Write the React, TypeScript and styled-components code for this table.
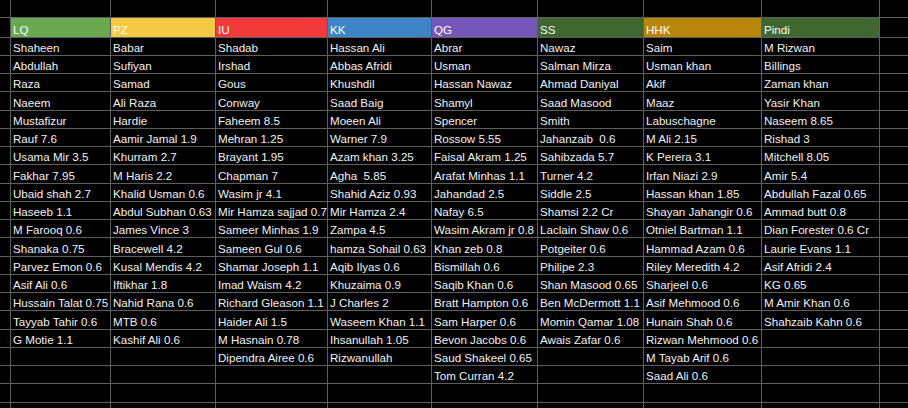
import React from "react";
import styled, { createGlobalStyle } from "styled-components";

const Global = createGlobalStyle`
  html, body {
    margin: 0;
    padding: 0;
    background: #000;
    overflow: hidden;
  }
`;

type Team = { name: string; color: string; players: string[] };

const teams: Team[] = [
  {
    name: "LQ",
    color: "#6aa84f",
    players: [
      "Shaheen", "Abdullah", "Raza", "Naeem", "Mustafizur", "Rauf 7.6", "Usama Mir 3.5",
      "Fakhar 7.95", "Ubaid shah 2.7", "Haseeb 1.1", "M Farooq 0.6", "Shanaka 0.75",
      "Parvez Emon 0.6", "Asif Ali 0.6", "Hussain Talat 0.75", "Tayyab Tahir 0.6", "G Motie 1.1",
    ],
  },
  {
    name: "PZ",
    color: "#f6c945",
    players: [
      "Babar", "Sufiyan", "Samad", "Ali Raza", "Hardie", "Aamir Jamal 1.9", "Khurram 2.7",
      "M Haris 2.2", "Khalid Usman 0.6", "Abdul Subhan 0.63", "James Vince 3", "Bracewell 4.2",
      "Kusal Mendis 4.2", "Iftikhar 1.8", "Nahid Rana 0.6", "MTB 0.6", "Kashif Ali 0.6",
    ],
  },
  {
    name: "IU",
    color: "#f33a3a",
    players: [
      "Shadab", "Irshad", "Gous", "Conway", "Faheem 8.5", "Mehran 1.25", "Brayant 1.95",
      "Chapman 7", "Wasim jr 4.1", "Mir Hamza sajjad 0.7", "Sameer Minhas 1.9", "Sameen Gul 0.6",
      "Shamar Joseph 1.1", "Imad Waism 4.2", "Richard Gleason 1.1", "Haider Ali 1.5",
      "M Hasnain 0.78", "Dipendra Airee 0.6",
    ],
  },
  {
    name: "KK",
    color: "#3d85c6",
    players: [
      "Hassan Ali", "Abbas Afridi", "Khushdil", "Saad Baig", "Moeen Ali", "Warner 7.9",
      "Azam khan 3.25", "Agha  5.85", "Shahid Aziz 0.93", "Mir Hamza 2.4", "Zampa 4.5",
      "hamza Sohail 0.63", "Aqib Ilyas 0.6", "Khuzaima 0.9", "J Charles 2", "Waseem Khan 1.1",
      "Ihsanullah 1.05", "Rizwanullah",
    ],
  },
  {
    name: "QG",
    color: "#7556b9",
    players: [
      "Abrar", "Usman", "Hassan Nawaz", "Shamyl", "Spencer", "Rossow 5.55", "Faisal Akram 1.25",
      "Arafat Minhas 1.1", "Jahandad 2.5", "Nafay 6.5", "Wasim Akram jr 0.8", "Khan zeb 0.8",
      "Bismillah 0.6", "Saqib Khan 0.6", "Bratt Hampton 0.6", "Sam Harper 0.6", "Bevon Jacobs 0.6",
      "Saud Shakeel 0.65", "Tom Curran 4.2",
    ],
  },
  {
    name: "SS",
    color: "#3e6830",
    players: [
      "Nawaz", "Salman Mirza", "Ahmad Daniyal", "Saad Masood", "Smith", "Jahanzaib  0.6",
      "Sahibzada 5.7", "Turner 4.2", "Siddle 2.5", "Shamsi 2.2 Cr", "Laclain Shaw 0.6",
      "Potgeiter 0.6", "Philipe 2.3", "Shan Masood 0.65", "Ben McDermott 1.1", "Momin Qamar 1.08",
      "Awais Zafar 0.6",
    ],
  },
  {
    name: "HHK",
    color: "#b8860b",
    players: [
      "Saim", "Usman khan", "Akif", "Maaz", "Labuschagne", "M Ali 2.15", "K Perera 3.1",
      "Irfan Niazi 2.9", "Hassan khan 1.85", "Shayan Jahangir 0.6", "Otniel Bartman 1.1",
      "Hammad Azam 0.6", "Riley Meredith 4.2", "Sharjeel 0.6", "Asif Mehmood 0.6", "Hunain Shah 0.6",
      "Rizwan Mehmood 0.6", "M Tayab Arif 0.6", "Saad Ali 0.6",
    ],
  },
  {
    name: "Pindi",
    color: "#3e6830",
    players: [
      "M Rizwan", "Billings", "Zaman khan", "Yasir Khan", "Naseem 8.65", "Rishad 3", "Mitchell 8.05",
      "Amir 5.4", "Abdullah Fazal 0.65", "Ammad butt 0.8", "Dian Forester 0.6 Cr", "Laurie Evans 1.1",
      "Asif Afridi 2.4", "KG 0.65", "M Amir Khan 0.6", "Shahzaib Kahn 0.6",
    ],
  },
];

const DATA_ROWS = 21;

const rowTemplate = (() => {
  const rows = ["17px", "19px"];
  for (let i = 0; i < DATA_ROWS; i++) rows.push(i % 4 === 3 ? "18px" : "17px");
  return rows.join(" ");
})();

const Sheet = styled.div<{ $rows: string }>`
  display: grid;
  grid-template-columns: 10px 99px 104px 111px 103px 105px 105px 117px 117px 1fr;
  grid-template-rows: ${(p) => p.$rows};
  gap: 1px;
  background: #5e5e5e;
  width: 908px;
  height: 408px;
  overflow: hidden;
  font-family: "Liberation Sans", Arial, sans-serif;
`;

const Cell = styled.div<{ $fill?: string }>`
  background: ${(p) => p.$fill ?? "#000"};
  color: #f2f2f2;
  font-size: 11.6px;
  line-height: 13px;
  display: flex;
  align-items: flex-end;
  padding: 0 2px 1px 2px;
  white-space: pre;
  overflow: hidden;
  min-width: 0;
`;

const HeaderCell = styled(Cell)`
  color: #fff;
`;

export default function App() {
  const cells: React.ReactNode[] = [];
  for (let c = 0; c < 10; c++) cells.push(<Cell key={`t${c}`} />);
  cells.push(<Cell key="h0" />);
  teams.forEach((t) =>
    cells.push(
      <HeaderCell key={`h${t.name}`} $fill={t.color}>
        {t.name}
      </HeaderCell>
    )
  );
  cells.push(<Cell key="h9" />);
  for (let r = 0; r < DATA_ROWS; r++) {
    cells.push(<Cell key={`r${r}c0`} />);
    teams.forEach((t) =>
      cells.push(<Cell key={`r${r}${t.name}`}>{t.players[r] ?? ""}</Cell>)
    );
    cells.push(<Cell key={`r${r}c9`} />);
  }
  return (
    <>
      <Global />
      <Sheet $rows={rowTemplate}>{cells}</Sheet>
    </>
  );
}
